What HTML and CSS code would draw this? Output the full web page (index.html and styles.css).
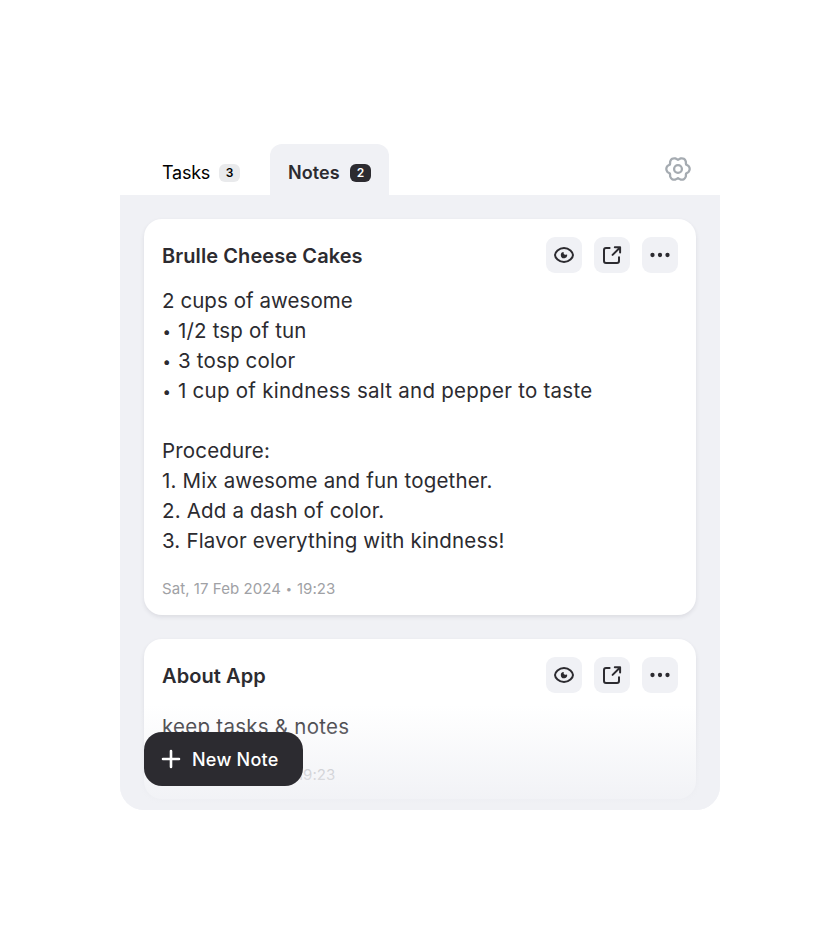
FILE: index.html
```html
<!DOCTYPE html>
<html lang="en">
<head>
<meta charset="utf-8">
<title>Notes</title>
<link rel="stylesheet" href="styles.css">
</head>
<body>
<svg class="defs" aria-hidden="true">
  <symbol id="eye" viewBox="0 0 24 24">
    <path d="M3 12C3 9.300 6.800 5 12 5S21 9.300 21 12S17.200 19 12 19S3 14.700 3 12Z" fill="none" stroke="currentColor" stroke-width="2"/>
    <path d="M11.800 8.900a2 2 0 0 0 3.200 2.300A3.150 3.150 0 1 1 11.800 8.900Z" fill="currentColor"/>
  </symbol>
  <symbol id="open" viewBox="0 0 24 24">
    <path d="M9.600 5H6Q4 5 4 7V18Q4 20 6 20H17Q19 20 19 18V14.200M12.600 11.900L19.800 4.700M14.800 4.200H20.100V9.500" fill="none" stroke="currentColor" stroke-width="2" stroke-linecap="round" stroke-linejoin="round"/>
  </symbol>
  <symbol id="more" viewBox="0 0 24 24">
    <g fill="currentColor"><circle cx="4.500" cy="12" r="2.150"/><circle cx="12" cy="12" r="2.150"/><circle cx="19.500" cy="12" r="2.150"/></g>
  </symbol>
</svg>
<main class="app">
  <header class="tabs">
    <div class="tab">Tasks<span class="count">3</span></div>
    <div class="tab active">Notes<span class="count">2</span></div>
    <svg class="settings" viewBox="-14 -14 28 28">
      <g id="rim">
        <path id="lobe" d="M8.140-4.700C8.700-3.700 9.600-3.900 10.500-2.900Q11.700-1.500 11.700 0T10.500 2.900C9.600 3.900 8.700 3.700 8.140 4.700"/>
        <use href="#lobe" transform="rotate(60)"/>
        <use href="#lobe" transform="rotate(120)"/>
      </g>
      <use href="#rim" transform="rotate(180)"/>
      <circle r="3.900"/>
    </svg>
  </header>
  <section class="panel">
    <article class="card">
      <div class="card-head">
        <h2>Brulle Cheese Cakes</h2>
        <div class="actions">
          <span class="action"><svg><use href="#eye"/></svg></span>
          <span class="action"><svg><use href="#open"/></svg></span>
          <span class="action"><svg><use href="#more"/></svg></span>
        </div>
      </div>
      <p class="text"><span class="tight">2 cups of awesome</span>
<span class="bullet">•</span>1/2 tsp of tun
<span class="bullet">•</span>3 tosp color
<span class="bullet">•</span><span class="loose">1 cup of kindness salt and pepper to taste</span>

Procedure:
1. Mix awesome and fun together.
2. Add a dash of color.
3. Flavor everything with kindness!</p>
      <p class="date">Sat, 17 Feb 2024 <span class="dot">•</span> 19:23</p>
    </article>
    <article class="card about">
      <div class="card-head">
        <h2>About App</h2>
        <div class="actions">
          <span class="action"><svg><use href="#eye"/></svg></span>
          <span class="action"><svg><use href="#open"/></svg></span>
          <span class="action"><svg><use href="#more"/></svg></span>
        </div>
      </div>
      <p class="text"><span class="loose">keep tasks &amp; notes</span></p>
      <p class="date">Sat, 17 Feb 2024 <span class="dot">•</span> 19:23</p>
    </article>
    <div class="fade"></div>
    <div class="new-note">
      <svg viewBox="0 0 20 20"><path d="M10 2V18M2 10H18"/></svg>
      <span>New Note</span>
    </div>
  </section>
</main>
</body>
</html>
```
FILE: styles.css
```css
* { box-sizing: border-box; }
body {
  margin: 0;
  background: #fff;
  color: #2c2b30;
  font-family: Inter, "Liberation Sans", sans-serif;
}
.defs { position: absolute; width: 0; height: 0; }
.app { width: 600px; margin: 144px auto 0; }
.tabs { display: flex; height: 51px; padding-left: 24px; }
.tab {
  display: flex;
  align-items: center;
  justify-content: space-between;
  width: 114px;
  padding: 6px 18px 0;
  font-size: 18px;
  letter-spacing: -0.25px;
  color: #000;
}
.tab.active {
  width: 119px;
  margin-left: 12px;
  background: #f0f1f5;
  border-radius: 12px 12px 0 0;
  color: #2c2b30;
  font-weight: 600;
  letter-spacing: 0.1px;
}
.count {
  width: 21px;
  height: 18px;
  border-radius: 6px;
  background: #e9eaec;
  font-size: 12px;
  line-height: 18px;
  font-weight: 600;
  letter-spacing: 0;
  text-align: center;
}
.active .count { background: #2c2b30; color: #fff; }
.settings {
  width: 28px;
  height: 28px;
  margin: 11px 28px 0 auto;
  fill: none;
  stroke: #a5abb1;
  stroke-width: 2.300;
  stroke-linecap: round;
}
.panel {
  position: relative;
  height: 615px;
  padding: 24px;
  background: #f0f1f5;
  border-radius: 0 0 24px 24px;
  overflow: hidden;
}
.card {
  height: 396px;
  padding: 18px;
  margin-bottom: 24px;
  background: #fff;
  border-radius: 18px;
  box-shadow: 0 2px 4px rgba(40, 42, 60, 0.1);
}
.card.about { height: 160px; }
.card-head { display: flex; justify-content: space-between; height: 36px; }
h2 {
  margin: 0;
  font-size: 20px;
  line-height: 38px;
  font-weight: 600;
  letter-spacing: 0.08px;
}
.actions { display: flex; gap: 12px; }
.action {
  display: grid;
  place-items: center;
  width: 36px;
  height: 36px;
  border-radius: 9px;
  background: #f0f1f5;
}
.action svg { width: 24px; height: 24px; }
.text {
  margin: 13px 0 0;
  font-size: 20.500px;
  line-height: 30px;
  letter-spacing: 0.17px;
  white-space: pre-line;
}
.tight { letter-spacing: 0.06px; }
.loose { letter-spacing: 0.26px; }
.bullet {
  display: inline-block;
  width: 16px;
  padding-left: 0.500px;
  font-size: 15px;
  line-height: 18px;
  vertical-align: 1.500px;
}
.about .text { margin-top: 19px; }
.date {
  margin: 23px 0 0;
  font-size: 15px;
  line-height: 20px;
  letter-spacing: 0.07px;
  color: #a0a1a5;
}
.dot { padding: 0 0.500px; font-size: 11px; line-height: 10px; vertical-align: 1px; }
.fade {
  position: absolute;
  left: 0;
  right: 0;
  bottom: 0;
  height: 105px;
  background: linear-gradient(rgba(240, 241, 245, 0), #f0f1f5);
}
.new-note {
  position: absolute;
  left: 24px;
  bottom: 24px;
  display: flex;
  align-items: center;
  gap: 11px;
  width: 159px;
  height: 54px;
  padding-left: 17px;
  border-radius: 18px;
  background: #2c2b30;
  color: #fff;
  font-size: 18px;
  font-weight: 500;
  letter-spacing: 0.25px;
}
.new-note svg {
  width: 20px;
  height: 20px;
  stroke: #fff;
  stroke-width: 2.600;
  stroke-linecap: round;
}
```
